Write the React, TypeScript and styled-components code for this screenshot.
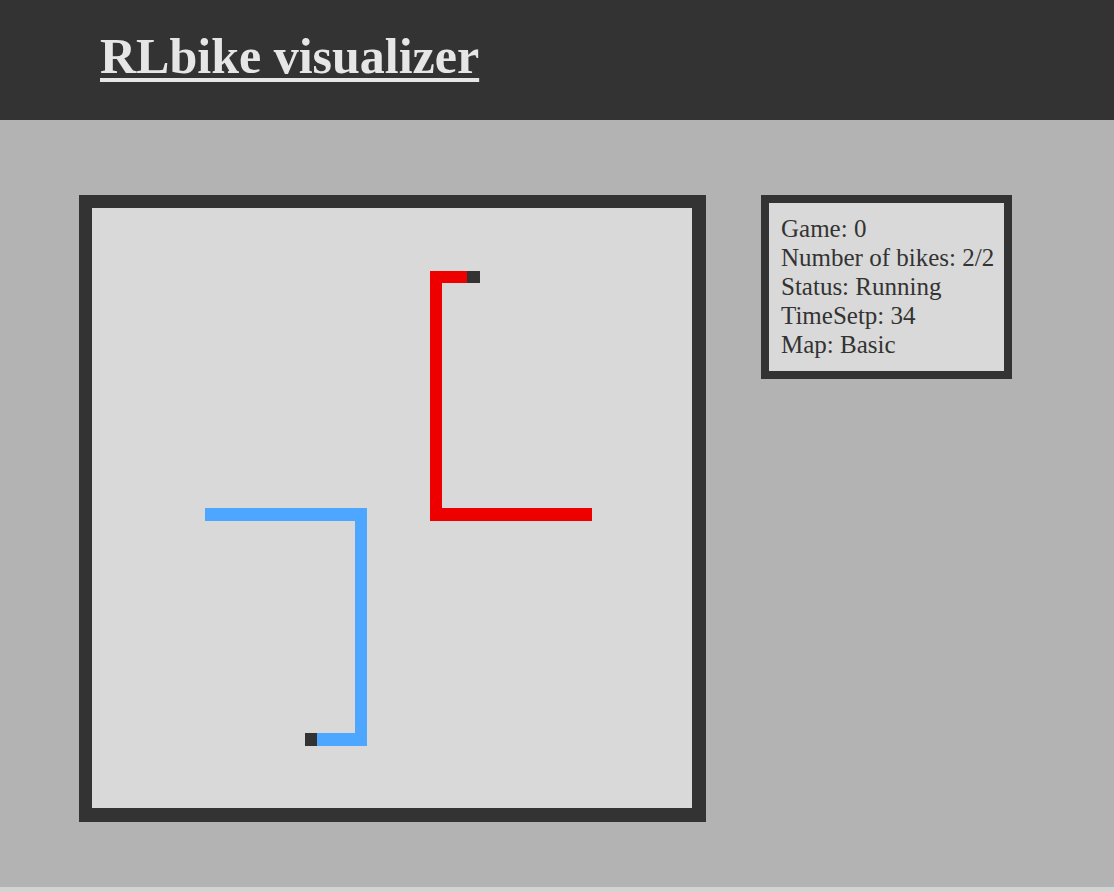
import React from "react";
import styled, { createGlobalStyle } from "styled-components";

const GlobalStyle = createGlobalStyle`
  html, body {
    margin: 0;
    padding: 0;
    background: #d3d3d3;
  }
  body {
    font-family: "Liberation Serif", "Times New Roman", serif;
  }
`;

const Header = styled.header`
  box-sizing: border-box;
  height: 120px;
  background: #333333;
  padding: 27px 0 0 100px;
`;

const Title = styled.h1`
  margin: 0;
  display: inline-block;
  font-family: "Liberation Serif", "Times New Roman", serif;
  font-weight: bold;
  font-size: 50px;
  line-height: normal;
  color: #e6e6e6;
  text-decoration: underline;
  text-decoration-thickness: 4px;
  text-underline-offset: 5px;
`;

const Main = styled.main`
  box-sizing: border-box;
  height: 767px;
  background: #b3b3b3;
  padding: 75px 0 0 79px;
  display: flex;
  align-items: flex-start;
  gap: 55px;
`;

const Board = styled.div`
  flex: none;
  width: 600px;
  height: 600px;
  background: #d9d9d9;
  border-style: solid;
  border-color: #333333;
  border-width: 13px 14px 14px 13px;
  display: block;
`;

const Info = styled.section`
  box-sizing: border-box;
  flex: none;
  width: 251px;
  background: #d9d9d9;
  border: 8px solid #333333;
  padding: 11px 8px 12px 12px;
  color: #333333;
  font-size: 25px;
  line-height: 29px;
  white-space: nowrap;
`;

const Line = styled.div``;

const CELL = 12.5;

type Pt = [number, number];

function cellsOf(path: Pt[]): Pt[] {
  const out: Pt[] = [];
  for (let i = 0; i < path.length - 1; i++) {
    const [x0, y0] = path[i];
    const [x1, y1] = path[i + 1];
    const dx = Math.sign(x1 - x0);
    const dy = Math.sign(y1 - y0);
    let x = x0;
    let y = y0;
    while (x !== x1 || y !== y1) {
      out.push([x, y]);
      x += dx;
      y += dy;
    }
  }
  return out;
}

const bikes: { color: string; path: Pt[]; head: Pt }[] = [
  {
    color: "#ee0000",
    path: [
      [39, 24],
      [27, 24],
      [27, 5],
      [30, 5],
    ],
    head: [30, 5],
  },
  {
    color: "#4da6ff",
    path: [
      [9, 24],
      [21, 24],
      [21, 42],
      [17, 42],
    ],
    head: [17, 42],
  },
];

const GameBoard: React.FC = () => (
  <Board>
    <svg width="600" height="600" viewBox="0 0 600 600" shapeRendering="crispEdges">
      {bikes.map((b, bi) => (
        <g key={bi}>
          {cellsOf(b.path).map(([x, y], i) => (
            <rect key={i} x={x * CELL} y={y * CELL} width={CELL} height={CELL} fill={b.color} />
          ))}
          <rect x={b.head[0] * CELL} y={b.head[1] * CELL} width={CELL} height={CELL} fill="#333333" />
        </g>
      ))}
    </svg>
  </Board>
);

export default function App() {
  return (
    <>
      <GlobalStyle />
      <Header>
        <Title>RLbike visualizer</Title>
      </Header>
      <Main>
        <GameBoard />
        <Info>
          <Line>Game: 0</Line>
          <Line>Number of bikes: 2/2</Line>
          <Line>Status: Running</Line>
          <Line>TimeSetp: 34</Line>
          <Line>Map: Basic</Line>
        </Info>
      </Main>
    </>
  );
}
